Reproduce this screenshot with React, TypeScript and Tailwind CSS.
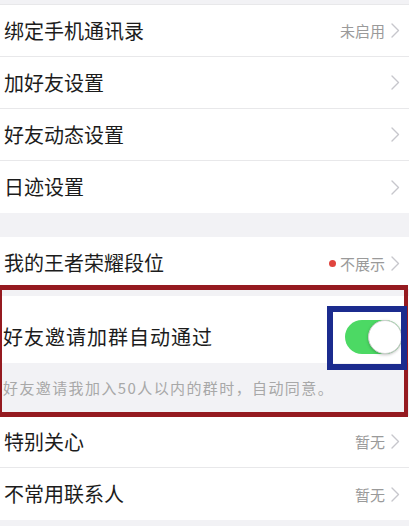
import React from "react";

const font = { fontFamily: '"Noto Sans CJK SC", "Noto Sans", sans-serif' };

function Chevron() {
  return (
    <svg width="9" height="15" viewBox="0 0 9 15" className="shrink-0">
      <path d="M1 1 L7.5 7.5 L1 14" fill="none" stroke="#c7c7cc" strokeWidth="1.4" strokeLinecap="round" strokeLinejoin="round" />
    </svg>
  );
}

function Row({ title, value, dot, border = true, h = "h-[52px]" }: { title: string; value?: string; dot?: boolean; border?: boolean; h?: string }) {
  return (
    <div className={`${h} bg-white flex items-center justify-between pl-[4px] pr-[9px] ${border ? "border-b border-[#e8e8ea]" : ""}`}>
      <span className="text-[20px] text-[#1c1c1c] leading-none">{title}</span>
      <div className="flex items-center gap-[6px]">
        {dot && <span className="w-[7px] h-[7px] rounded-full bg-[#e0443e] mr-[-2px]" />}
        {value && <span className="text-[15px] text-[#9a9a9a] leading-none">{value}</span>}
        <Chevron />
      </div>
    </div>
  );
}

export default function App() {
  return (
    <div className="w-[409px] h-[526px] bg-[#f2f2f5] overflow-hidden" style={font}>
      <div className="h-[5px] border-b border-[#e8e8ea]" />
      <Row title="绑定手机通讯录" value="未启用" />
      <Row title="加好友设置" />
      <Row title="好友动态设置" />
      <Row title="日迹设置" border={false} />
      <div className="h-[24px]" />
      <Row title="我的王者荣耀段位" value="不展示" dot border={false} />
      <div className="relative">
        <div className="h-[7px]" />
        <div className="h-[67px] bg-white flex items-center justify-between pl-[3px] pr-[7px] pt-[15px]">
          <span className="text-[20px] text-[#1c1c1c] leading-none tracking-[1px]">好友邀请加群自动通过</span>
          <div className="relative w-[57px] h-[34px] rounded-full bg-[#4cd964]">
            <div className="absolute right-0 top-0 w-[34px] h-[34px] rounded-full bg-white border border-[#cfcfcf] shadow-[0_1px_3px_rgba(0,0,0,0.25)]" />
          </div>
        </div>
        <div className="h-[53px] pl-[3px] pt-[12px]">
          <span className="text-[15px] text-[#a8a8a8] leading-none tracking-[1.4px]">好友邀请我加入50人以内的群时，自动同意。</span>
        </div>
        <div className="absolute left-0 right-[1px] top-[-4px] h-[132px] border-y-[5px] border-r-[4px] border-l-[2px] border-[#951a20] pointer-events-none" />
        <div className="absolute left-[327px] top-[17px] w-[80px] h-[64px] border-[6px] border-[#1b2b8e] pointer-events-none" />
      </div>
      <Row title="特别关心" value="暂无" />
      <Row title="不常用联系人" value="暂无" border={false} />
    </div>
  );
}
